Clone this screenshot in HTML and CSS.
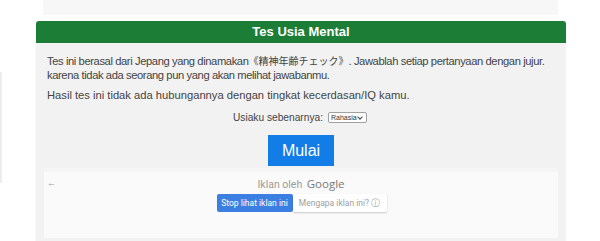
FILE: index.html
```html
<!DOCTYPE html>
<html lang="id">
<head>
<meta charset="utf-8">
<title>Tes Usia Mental</title>
<link rel="stylesheet" href="styles.css">
</head>
<body>
<div class="edge"></div>
<div class="page">
  <div class="topband"></div>
  <div class="card">
    <div class="card-head">Tes Usia Mental</div>
    <div class="card-body">
      <p class="txt txt-intro">Tes ini berasal dari Jepang yang dinamakan<span class="cjk">《精神年齢チェック》</span>. Jawablah setiap pertanyaan dengan jujur.<br>karena tidak ada seorang pun yang akan melihat jawabanmu.</p>
      <p class="txt">Hasil tes ini tidak ada hubungannya dengan tingkat kecerdasan/IQ kamu.</p>
      <div class="age-row">
        <label class="age-label" for="age">Usiaku sebenarnya:</label>
        <span class="select-wrap"><select id="age" class="age-select"><option>Rahasia</option></select></span>
      </div>
      <div class="start-row"><button class="start-btn">Mulai</button></div>
    </div>
    <div class="ad">
      <div class="ad-back">&#8592;</div>
      <div class="ad-by"><span class="ad-by-txt">Iklan oleh</span> <span class="ad-google">Google</span></div>
      <div class="ad-btns">
        <button class="ad-stop">Stop lihat iklan ini</button><button class="ad-why">Mengapa iklan ini? <span class="ad-info">ⓘ</span></button>
      </div>
    </div>
  </div>
</div>
</body>
</html>
```

FILE: styles.css
```css
* { box-sizing: border-box; }
html, body { margin: 0; padding: 0; background: #ffffff; }
body {
  font-family: "Liberation Sans", Arial, "Noto Sans CJK JP", sans-serif;
  color: #333;
  width: 600px;
  height: 241px;
  overflow: hidden;
  position: relative;
}
.edge {
  position: absolute;
  left: 0;
  top: 72px;
  width: 2px;
  height: 111px;
  border-left: 1px solid #ececec;
  border-right: 1px solid #f3eeee;
}
.page { padding: 0 34px 0 36px; }
.topband {
  height: 15px;
  margin: 0 8px 6px 7px;
  background: #f7f7f7;
}
.card {
  background: #f2f2f2;
  height: 230px;
  border-radius: 3px 3px 0 0;
  box-shadow: 0 0 0 1px #fbfbfb;
}
.card-head {
  height: 22px;
  line-height: 22px;
  background: #1c7d36;
  color: #fff;
  font-weight: bold;
  font-size: 13px;
  text-align: center;
  border-radius: 3px 3px 0 0;
}
.card-body { padding: 11px 4px 0 11px; }
.txt {
  margin: 0 0 6px;
  font-size: 11.2px;
  line-height: 14px;
  color: #444;
  white-space: nowrap;
}
.txt-intro { letter-spacing: -0.4px; }
.cjk {
  font-family: "Noto Sans CJK JP", sans-serif;
  font-size: 10px;
  letter-spacing: 0;
}
.age-row {
  margin-top: 8px;
  display: flex;
  justify-content: center;
  align-items: center;
  gap: 5px;
  height: 14px;
  padding-right: 9px;
}
.age-label { font-size: 10.2px; color: #444; }
.select-wrap {
  position: relative;
  display: inline-block;
  width: 39px;
  height: 11px;
  border: 1px solid #a0a0a0;
  border-radius: 2px;
  background: #fff;
}
.select-wrap::after {
  content: "";
  position: absolute;
  right: 4px;
  top: 2px;
  width: 3px;
  height: 3px;
  border-right: 1px solid #444;
  border-bottom: 1px solid #444;
  transform: rotate(45deg);
  pointer-events: none;
}
.age-select {
  appearance: none;
  -webkit-appearance: none;
  display: block;
  font-family: "Liberation Sans", Arial, sans-serif;
  font-size: 7px;
  line-height: 9px;
  height: 9px;
  width: 100%;
  padding: 0 0 0 2px;
  border: none;
  background: transparent;
  color: #333;
}
.start-row {
  display: flex;
  justify-content: center;
  margin-top: 11px;
  padding-right: 7px;
}
.start-btn {
  width: 66px;
  height: 31px;
  border: none;
  background: #127de6;
  color: #fff;
  font-family: "Liberation Sans", Arial, sans-serif;
  font-size: 16px;
  padding: 0;
}
.ad {
  margin: 2px 8px 0 8px;
  background: #fafafa;
  height: 70px;
  border-top: 4px solid #f5f5f5;
  position: relative;
  padding-top: 3px;
}
.ad-back {
  position: absolute;
  left: 3px;
  top: 6px;
  font-size: 9px;
  color: #999;
}
.ad-by {
  text-align: center;
  line-height: 16px;
  color: #9a9a9a;
}
.ad-by-txt { font-size: 10.5px; font-family: Roboto, "Liberation Sans", Arial, sans-serif; }
.ad-google { font-size: 11.5px; color: #7a7a7a; font-family: "Open Sans", Roboto, Arial, sans-serif; }
.ad-btns {
  display: flex;
  justify-content: center;
  margin-top: 1px;
  padding-left: 1px;
}
.ad-stop, .ad-why {
  height: 18px;
  border: none;
  padding: 0;
  font-family: Roboto, "Liberation Sans", Arial, sans-serif;
  font-size: 8.5px;
}
.ad-stop {
  width: 76px;
  background: #3b7fe3;
  color: #fff;
  border-radius: 2px;
}
.ad-why {
  width: 94px;
  background: #fff;
  color: #a0a0a0;
  border-radius: 0 2px 2px 0;
  box-shadow: 0 1px 2px rgba(0,0,0,0.2);
}
.ad-info { font-size: 9px; }
```
